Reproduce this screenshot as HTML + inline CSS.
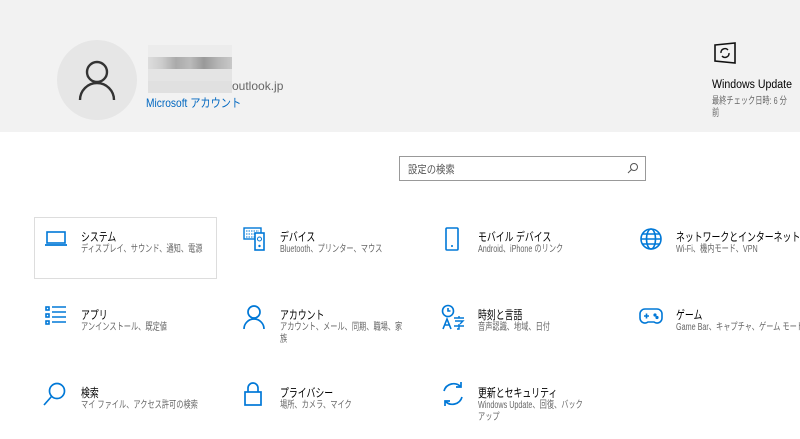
<!DOCTYPE html>
<html><head><meta charset="utf-8"><style>
*{margin:0;padding:0;box-sizing:border-box}
body{width:800px;height:439px;overflow:hidden;background:#fff;font-family:"Liberation Sans","Noto Sans CJK JP",sans-serif;color:#000;position:relative}
.hdr{position:absolute;left:0;top:0;width:800px;height:132px;background:#f2f2f2}
.abs{position:absolute;white-space:nowrap}
.t{font-size:12px;color:#000;transform:scaleX(.74);transform-origin:left top}
.s{font-size:10px;color:#666;line-height:14px;transform:scaleX(.72);transform-origin:left top}
.ic{position:absolute}
</style></head><body>
<div class="hdr"></div>
<div class="abs" style="left:57px;top:40px;width:80px;height:80px;border-radius:50%;background:#e6e6e6"></div>
<svg class="ic" style="left:77px;top:58px" width="40" height="44" viewBox="0 0 40 44"><circle cx="20" cy="14" r="10" fill="none" stroke="#333" stroke-width="2.4"/><path d="M3 42 A17 17 0 0 1 37 42" fill="none" stroke="#333" stroke-width="2.4"/></svg>
<div class="abs" style="left:148px;top:45px;width:84px;height:12px;background:#ececec"></div>
<div class="abs" style="left:148px;top:57px;width:84px;height:12px;background:linear-gradient(90deg,#ddd,#ccc,#aaa,#bbb,#999,#b5b5b5,#c8c8c8)"></div>
<div class="abs" style="left:148px;top:69px;width:84px;height:12px;background:#e4e4e4"></div>
<div class="abs" style="left:148px;top:81px;width:84px;height:12px;background:#e0e0e0"></div>
<div class="abs" style="left:232px;top:79px;font-size:12px;color:#666">outlook.jp</div>
<div class="abs" style="left:146px;top:94px;font-size:12px;color:#0067c0;transform:scaleX(.85);transform-origin:left top">Microsoft アカウント</div>
<svg class="ic" style="left:713px;top:42px" width="24" height="22" viewBox="0 0 24 22"><path d="M2 3 L22 1 L22 21 L2 19 Z" fill="none" stroke="#111" stroke-width="1.6"/><path d="M8 11 A4 4 0 0 1 15 8 M16 11 A4 4 0 0 1 9 14" fill="none" stroke="#111" stroke-width="1.4"/></svg>
<div class="abs" style="left:712px;top:79px;font-size:11.5px;transform:scaleX(.92);transform-origin:left top">Windows Update</div>
<div class="abs s" style="left:712px;top:95px">最終チェック日時: 6 分</div>
<div class="abs s" style="left:712px;top:107px">前</div>
<div class="abs" style="left:399px;top:156px;width:247px;height:25px;border:1.5px solid #999;background:#fff"></div>
<div class="abs" style="left:408px;top:161px;font-size:11px;color:#555;transform:scaleX(.85);transform-origin:left top">設定の検索</div>
<svg class="ic" style="left:627px;top:162px" width="12" height="12" viewBox="0 0 12 12"><circle cx="7" cy="5" r="3.5" fill="none" stroke="#555"/><path d="M4.5 7.5 L1 11" stroke="#555"/></svg>
<div class="abs" style="left:34px;top:217px;width:183px;height:62px;border:1.5px solid #ddd"></div>

<svg class="ic" style="left:44px;top:230px" width="24" height="18" viewBox="0 0 24 18"><rect x="3" y="2" width="18" height="11" fill="none" stroke="#0078d7" stroke-width="1.6"/><path d="M1 15 H23" stroke="#0078d7" stroke-width="1.8"/></svg>
<div class="abs t" style="left:81px;top:228px">システム</div>
<div class="abs s" style="left:81px;top:243px">ディスプレイ、サウンド、通知、電源</div>
<svg class="ic" style="left:243px;top:227px" width="24" height="24" viewBox="0 0 24 24"><rect x="1" y="1" width="17" height="11" fill="none" stroke="#0078d7" stroke-width="1.4"/><path d="M3 4h13M3 7h13M3 10h10" stroke="#0078d7" stroke-dasharray="1.5 1"/><rect x="12" y="6" width="9" height="17" fill="#fff" stroke="#0078d7" stroke-width="1.6"/><circle cx="16.5" cy="12" r="2" fill="none" stroke="#0078d7"/><circle cx="16.5" cy="19" r="1.2" fill="#0078d7"/></svg>
<div class="abs t" style="left:280px;top:228px">デバイス</div>
<div class="abs s" style="left:280px;top:243px">Bluetooth、プリンター、マウス</div>
<svg class="ic" style="left:444px;top:226px" width="16" height="26" viewBox="0 0 16 26"><rect x="2" y="2" width="12" height="22" rx="1" fill="none" stroke="#0078d7" stroke-width="1.6"/><path d="M7 20h2" stroke="#0078d7" stroke-width="1.6"/></svg>
<div class="abs t" style="left:478px;top:228px">モバイル デバイス</div>
<div class="abs s" style="left:478px;top:243px">Android、iPhone のリンク</div>
<svg class="ic" style="left:639px;top:227px" width="24" height="24" viewBox="0 0 24 24" fill="none" stroke="#0078d7" stroke-width="1.6"><circle cx="12" cy="12" r="10"/><ellipse cx="12" cy="12" rx="4.5" ry="10"/><path d="M2 12h20M3.5 7h17M3.5 17h17"/></svg>
<div class="abs t" style="left:676px;top:228px">ネットワークとインターネット</div>
<div class="abs s" style="left:676px;top:243px">Wi-Fi、機内モード、VPN</div>

<svg class="ic" style="left:44px;top:305px" width="24" height="22" viewBox="0 0 24 22" stroke="#0078d7" stroke-width="1.6" fill="none"><rect x="2" y="2" width="3" height="3"/><rect x="2" y="9" width="3" height="3"/><rect x="2" y="16" width="3" height="3"/><path d="M8 2h14M8 7h14M8 12h14M8 17h14"/></svg>
<div class="abs t" style="left:81px;top:306px">アプリ</div>
<div class="abs s" style="left:81px;top:321px">アンインストール、既定値</div>
<svg class="ic" style="left:243px;top:304px" width="22" height="26" viewBox="0 0 22 26" fill="none" stroke="#0078d7" stroke-width="1.7"><circle cx="11" cy="8" r="6"/><path d="M1 25 A10 10 0 0 1 21 25"/></svg>
<div class="abs t" style="left:280px;top:306px">アカウント</div>
<div class="abs s" style="left:280px;top:321px">アカウント、メール、同期、職場、家</div>
<div class="abs s" style="left:280px;top:333px">族</div>
<svg class="ic" style="left:440px;top:304px" width="26" height="26" viewBox="0 0 26 26" fill="none" stroke="#0078d7" stroke-width="1.6"><circle cx="8" cy="7" r="5.5"/><path d="M8 4v3h2.5"/><path d="M3 25l4-10 4 10M4.5 21h5"/><path d="M14 14h10M19 12v2M15 17h8l-3 3M19 20v5h-2M14 22h10" stroke-width="1.4"/></svg>
<div class="abs t" style="left:478px;top:306px">時刻と言語</div>
<div class="abs s" style="left:478px;top:321px">音声認識、地域、日付</div>
<svg class="ic" style="left:639px;top:307px" width="24" height="18" viewBox="0 0 24 18" fill="none" stroke="#0078d7" stroke-width="1.6"><path d="M6 2h12a5 5 0 0 1 5 5v4a5 5 0 0 1-8 4H9a5 5 0 0 1-8-4V7a5 5 0 0 1 5-5z"/><path d="M5 9h5M7.5 6.5v5"/><circle cx="16" cy="8" r=".8" fill="#0078d7"/><circle cx="18" cy="10.5" r=".8" fill="#0078d7"/></svg>
<div class="abs t" style="left:676px;top:306px">ゲーム</div>
<div class="abs s" style="left:676px;top:321px">Game Bar、キャプチャ、ゲーム モード</div>

<svg class="ic" style="left:42px;top:381px" width="26" height="26" viewBox="0 0 26 26" fill="none" stroke="#0078d7" stroke-width="1.7"><circle cx="15" cy="10" r="7.5"/><path d="M9.5 15.5L2 24"/></svg>
<div class="abs t" style="left:81px;top:384px">検索</div>
<div class="abs s" style="left:81px;top:399px">マイ ファイル、アクセス許可の検索</div>
<svg class="ic" style="left:243px;top:381px" width="20" height="26" viewBox="0 0 20 26" fill="none" stroke="#0078d7" stroke-width="1.7"><path d="M5 11V7a5 5 0 0 1 10 0v4"/><rect x="2" y="11" width="16" height="13"/></svg>
<div class="abs t" style="left:280px;top:384px">プライバシー</div>
<div class="abs s" style="left:280px;top:399px">場所、カメラ、マイク</div>
<svg class="ic" style="left:440px;top:381px" width="26" height="26" viewBox="0 0 26 26" fill="none" stroke="#0078d7" stroke-width="1.7"><path d="M4 10A10 10 0 0 1 21 6M22 16A10 10 0 0 1 5 20"/><path d="M21 1v5h-5M5 25v-5h5"/></svg>
<div class="abs t" style="left:478px;top:384px">更新とセキュリティ</div>
<div class="abs s" style="left:478px;top:399px">Windows Update、回復、バック</div>
<div class="abs s" style="left:478px;top:411px">アップ</div>
</body></html>
